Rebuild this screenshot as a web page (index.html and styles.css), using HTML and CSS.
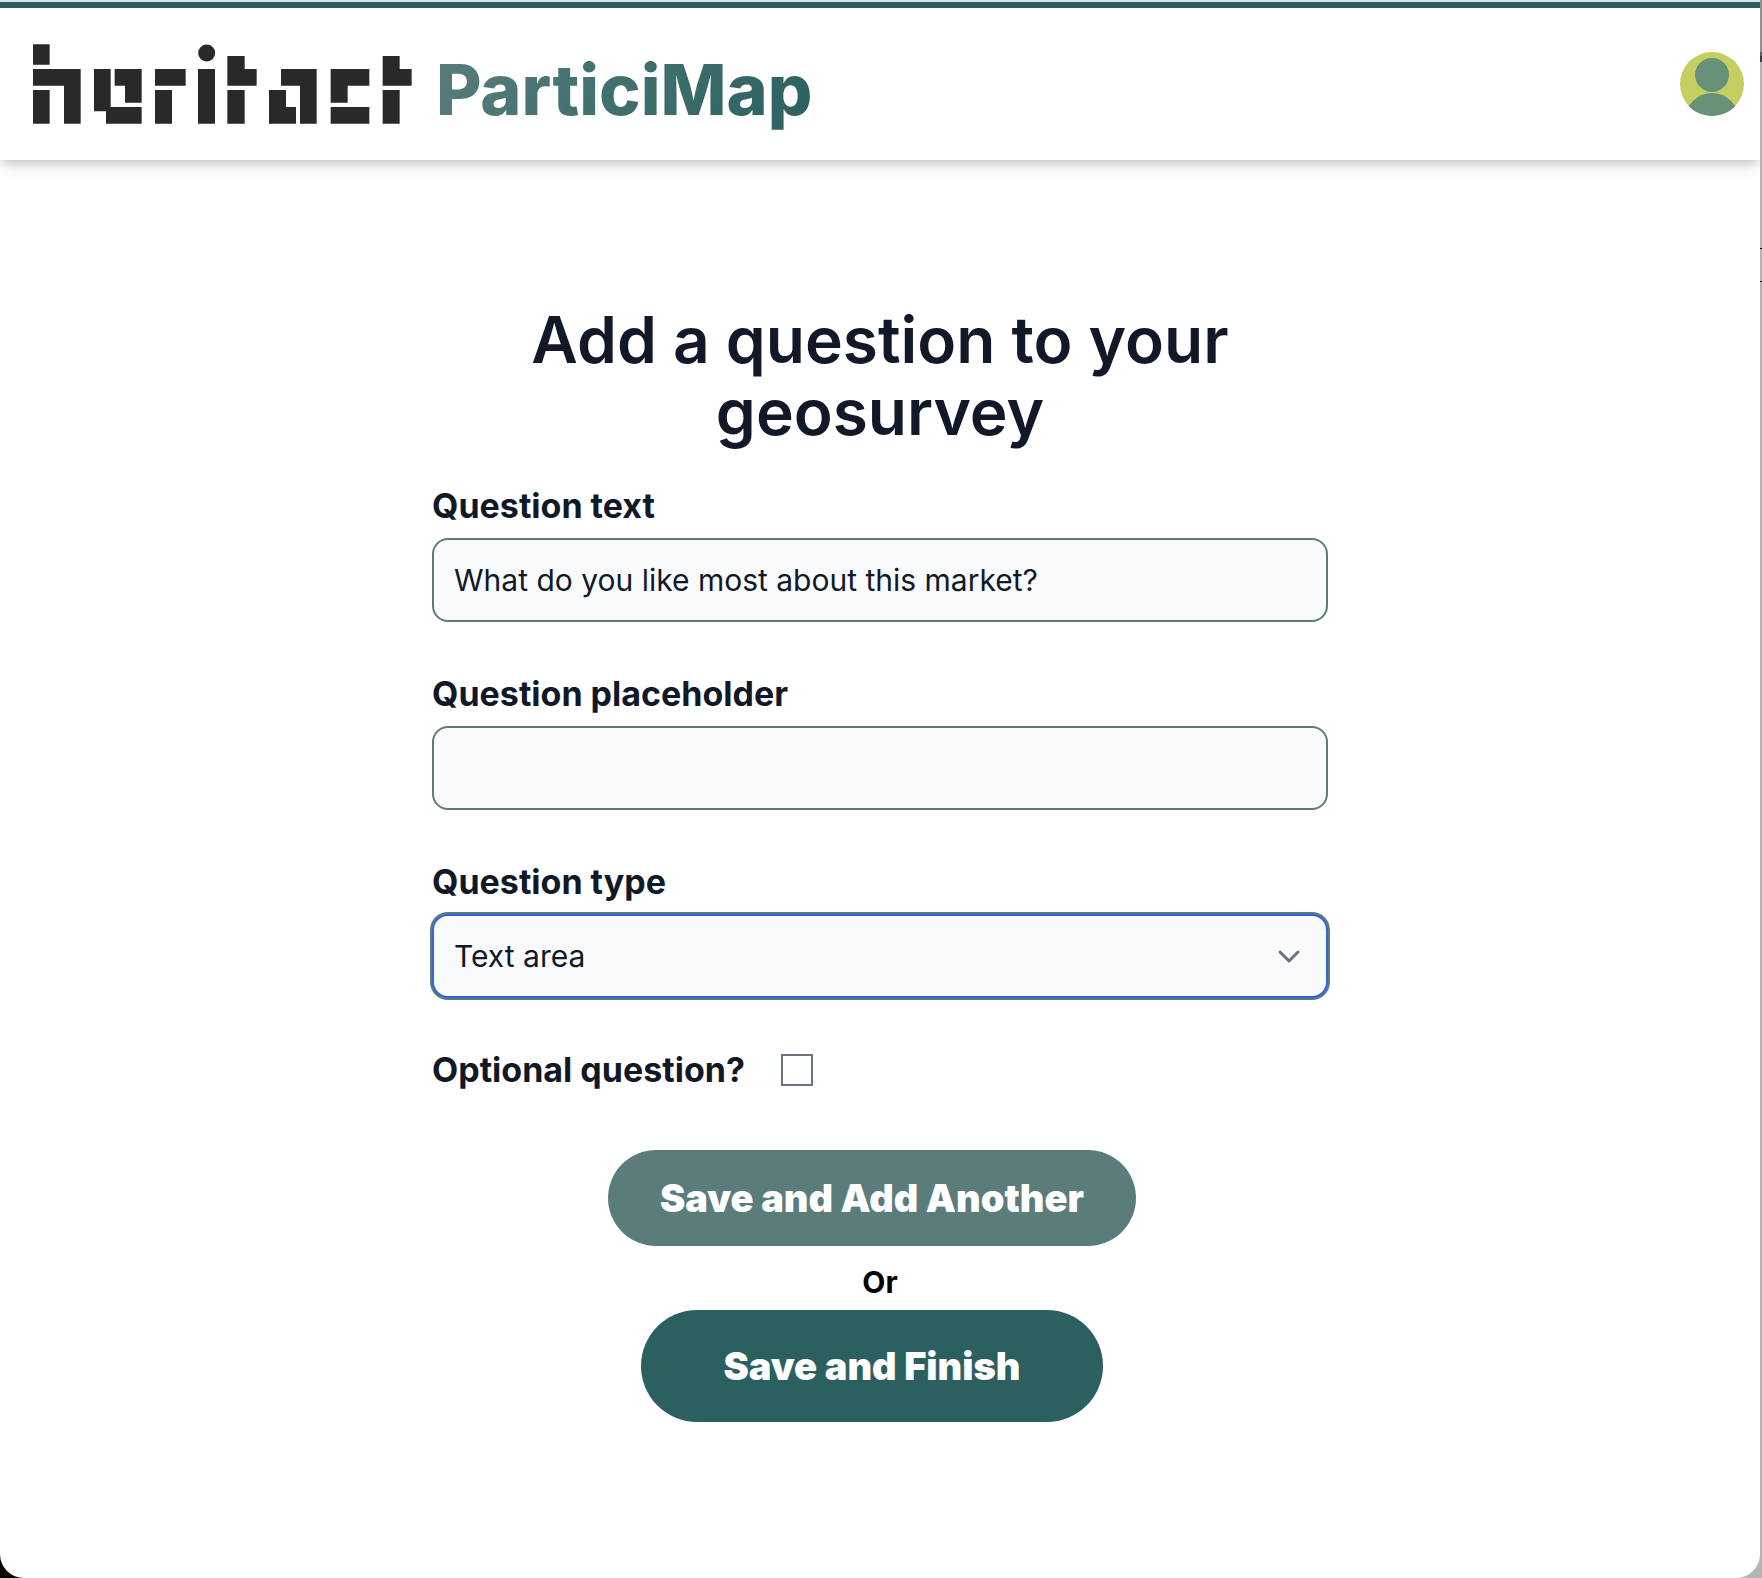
FILE: index.html
```html
<!DOCTYPE html>
<html lang="en">
<head>
<meta charset="utf-8">
<meta name="viewport" content="width=device-width, initial-scale=1">
<title>Heritact ParticiMap</title>
<link rel="stylesheet" href="styles.css">
</head>
<body>
<div class="window">
  <header class="header">
    <a class="brand" href="#">
      <svg class="logo" viewBox="39 43 1137 238" role="img" aria-label="heritact">
        <path d="M39 43h50v61H39zM39 117h143v164h-50V167H39zM39 180h50v101H39z"/>
        <path d="M222 117h50v114h93v50H258v-37h-36zM284 117h81v101h-50v-51h-31z"/>
        <path d="M405 117h92v50h-92zM405 180h51v101h-51z"/>
        <circle cx="560" cy="69" r="25.500"/>
        <path d="M534 117h51v164h-51zM622 78h52v39h36v50h-88zM622 180h52v101h-52z"/>
        <path d="M783 117h107v164h-50V167h-57zM747 180h51v51h30v50h-81z"/>
        <path d="M932 117h116v50h-65v51h-51zM932 231h116v50H932z"/>
        <path d="M1088 78h51v39h36v50h-87zM1088 180h51v101h-51z"/>
      </svg>
      <span class="wordmark">ParticiMap</span>
    </a>
    <button class="avatar" type="button" aria-label="Account">
      <svg viewBox="0 0 64 64" aria-hidden="true">
        <clipPath id="disc"><circle cx="32" cy="32" r="32"/></clipPath>
        <g clip-path="url(#disc)">
          <rect width="64" height="64" fill="#c6ce62"/>
          <circle cx="32" cy="23" r="17" fill="#679178"/>
          <circle cx="32" cy="68" r="27" fill="#679178"/>
        </g>
      </svg>
    </button>
  </header>
  <main class="main">
    <form class="form">
      <h1 class="title">Add a question to your geosurvey</h1>
      <div class="field">
        <label class="label" for="text">Question text</label>
        <input class="control" id="text" type="text" value="What do you like most about this market?">
      </div>
      <div class="field">
        <label class="label" for="placeholder">Question placeholder</label>
        <input class="control" id="placeholder" type="text">
      </div>
      <div class="field">
        <label class="label" for="type">Question type</label>
        <div class="select">
          <select class="control control-active" id="type"><option>Text area</option></select>
          <svg class="chevron" viewBox="0 0 24 24" aria-hidden="true"><path d="M3 8l9 9 9-9"/></svg>
        </div>
      </div>
      <div class="option">
        <label class="label" for="optional">Optional question?</label>
        <input class="checkbox" id="optional" type="checkbox">
      </div>
      <div class="actions">
        <button class="button button-another" type="button">Save and Add Another</button>
        <p class="or">Or</p>
        <button class="button button-finish" type="button">Save and Finish</button>
      </div>
    </form>
  </main>
</div>
</body>
</html>
```
FILE: styles.css
```css
* {
  box-sizing: border-box;
}

body {
  margin: 0;
  font-family: Inter, "Open Sans", sans-serif;
  color: #111827;
  background:
    linear-gradient(#8f8f8f 52px, #5c5c5c 52px 56px, #24484a 56px 62px, transparent 62px 248px, #000 248px 249px, transparent 249px 281px, #000 281px 282px, transparent 282px) right top / 2px 300px no-repeat,
    linear-gradient(90deg, #0c0402 50%, #b4b4b4 50%);
}

.window {
  display: flex;
  flex-direction: column;
  min-height: 100vh;
  margin-right: 2px;
  border-top: 2px solid #dfe3e3;
  border-radius: 0 0 24px 24px;
  background: #fff;
  overflow: hidden;
}

.header {
  display: flex;
  align-items: center;
  justify-content: space-between;
  height: 158px;
  padding: 0 16px 0 33px;
  border-top: 6px solid #2c6060;
  background: #fff;
  box-shadow: 0 8px 14px -2px rgba(0, 0, 0, 0.14), 0 4px 8px -2px rgba(0, 0, 0, 0.12);
}

.brand {
  display: flex;
  align-items: center;
  gap: 24px;
  text-decoration: none;
}

.logo {
  width: 379px;
  height: 80px;
  fill: #292929;
}

.wordmark {
  padding-top: 12px;
  font-size: 70px;
  line-height: 88px;
  font-weight: 800;
  color: transparent;
  background: linear-gradient(120deg, #5a7d7c, #437170 45%, #2c6060);
  background-clip: text;
  -webkit-background-clip: text;
}

.avatar {
  width: 64px;
  height: 64px;
  padding: 0;
  border: 0;
  border-radius: 50%;
  background: none;
}

.avatar svg {
  display: block;
}

.main {
  padding: 144px 32px;
}

.form {
  max-width: 896px;
  margin: 0 auto;
}

.title {
  margin: 0 0 34px;
  font-size: 64px;
  line-height: 72px;
  font-weight: 600;
  text-align: center;
}

.field {
  margin-bottom: 48px;
}

.label {
  display: block;
  font-size: 34px;
  line-height: 48px;
  font-weight: 700;
}

.control {
  display: block;
  width: 100%;
  height: 84px;
  margin-top: 8px;
  padding: 0 20px;
  border: 2px solid #5a7d7c;
  border-radius: 16px;
  background: #f9fafc;
  color: #111827;
  font-family: inherit;
  font-size: 30px;
  line-height: 40px;
  appearance: none;
  outline: none;
}

.control-active {
  border-color: #3263e6;
  box-shadow: 0 0 0 2px #5a7d7c;
}

.select {
  display: grid;
  align-items: center;
}

.select > * {
  grid-area: 1 / 1;
}

.chevron {
  justify-self: end;
  width: 24px;
  height: 24px;
  margin: 8px 27px 0 0;
  fill: none;
  stroke: #6b7280;
  stroke-width: 3;
  stroke-linecap: round;
  stroke-linejoin: round;
  pointer-events: none;
}

.option {
  display: flex;
  align-items: center;
  gap: 36px;
}

.checkbox {
  width: 32px;
  height: 32px;
  margin: 0;
  border: 2px solid #6b7280;
  background: #fff;
  appearance: none;
}

.actions {
  display: flex;
  flex-direction: column;
  align-items: center;
  padding-top: 56px;
}

.button {
  margin-right: 16px;
  border: 0;
  border-radius: 56px;
  color: #fff;
  font-family: inherit;
  font-size: 38px;
  line-height: 56px;
  font-weight: 900;
}

.button-another {
  padding: 20px 52px;
  background: #5a7d7c;
}

.button-finish {
  padding: 28px 82px;
  background: #2c6060;
}

.or {
  margin: 0;
  padding: 16px 0 8px;
  color: #000;
  font-size: 30px;
  line-height: 40px;
  font-weight: 700;
}
```
